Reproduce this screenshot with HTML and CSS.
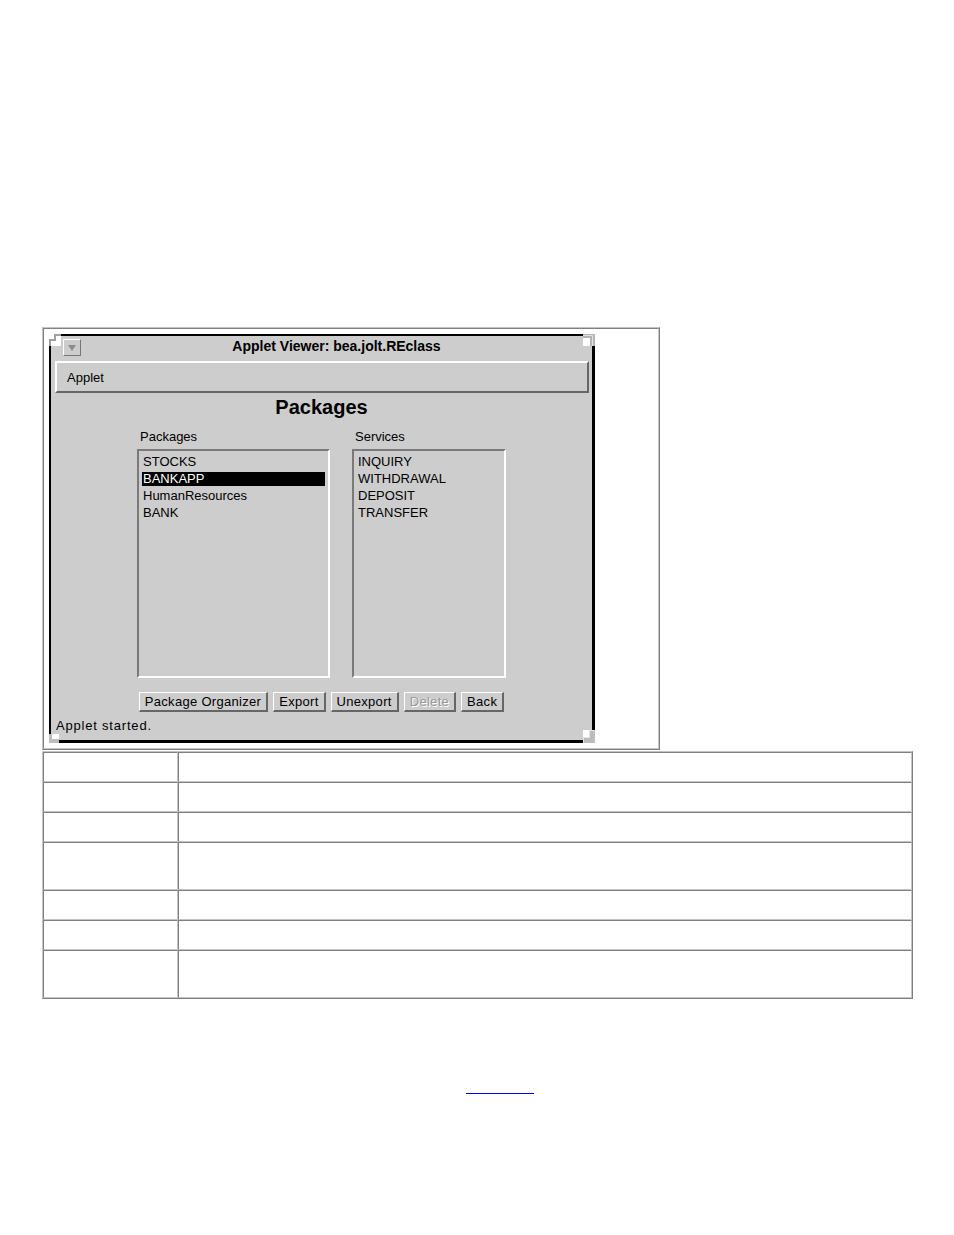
FILE: index.html
```html
<!DOCTYPE html>
<html>
<head>
<meta charset="utf-8">
<title>Packages</title>
<link rel="stylesheet" href="styles.css">
</head>
<body>
<div class="page">
  <table class="shot">
    <tr>
      <td class="shot-cell">
        <div class="shot-inner">
          <div class="window">
            <svg class="corner corner-tl" width="12" height="12" viewBox="0 0 12 12"><rect x="0" y="0" width="12" height="12" fill="#ffffff"/><path d="M1 12 V6 H6 V1 H12" fill="none" stroke="#a0a0a0" stroke-width="2"/></svg>
            <svg class="corner corner-tr" width="12" height="12" viewBox="0 0 12 12"><rect x="0" y="0" width="12" height="12" fill="#ffffff"/><polygon points="0,0 12,0 12,12 7,12 7,4 0,4" fill="#b4b4b4"/><path d="M0 1.5 H9.5 V12" fill="none" stroke="#e2e2e2" stroke-width="1"/></svg>
            <svg class="corner corner-br" width="12" height="13" viewBox="0 0 12 13"><rect x="0" y="0" width="12" height="13" fill="#ffffff"/><polygon points="6,0 12,0 12,13 0,13 0,7 6,7" fill="#bcbcbc"/><path d="M0.5 13 V7.5 H6.5 V0.5 H12" fill="none" stroke="#e6e6e6" stroke-width="1"/></svg>
            <svg class="corner corner-bl" width="10" height="9" viewBox="0 0 10 9"><rect x="0" y="0" width="10" height="9" fill="#ffffff"/><polygon points="0,0 3,0 3,5 10,5 10,9 0,9" fill="#bdbdbd"/></svg>
            <div class="titlebar">
              <div class="closebox"><svg width="8" height="6" viewBox="0 0 8 6"><polygon points="0,0 8,0 4,6" fill="#8c8c8c"/></svg></div>
              <div class="title">Applet Viewer: bea.jolt.REclass</div>
            </div>
            <div class="menubar">Applet</div>
            <div class="heading">Packages</div>
            <div class="lists">
              <div class="col">
                <div class="label">Packages</div>
                <div class="listbox listbox-wide">
                  <div class="item">STOCKS</div>
                  <div class="item sel">BANKAPP</div>
                  <div class="item">HumanResources</div>
                  <div class="item">BANK</div>
                </div>
              </div>
              <div class="col">
                <div class="label">Services</div>
                <div class="listbox listbox-narrow">
                  <div class="item">INQUIRY</div>
                  <div class="item">WITHDRAWAL</div>
                  <div class="item">DEPOSIT</div>
                  <div class="item">TRANSFER</div>
                </div>
              </div>
            </div>
            <div class="buttons">
              <span class="btn">Package Organizer</span>
              <span class="btn">Export</span>
              <span class="btn">Unexport</span>
              <span class="btn btn-disabled">Delete</span>
              <span class="btn">Back</span>
            </div>
            <div class="status">Applet started.</div>
          </div>
        </div>
      </td>
    </tr>
  </table>
  <table class="grid">
    <tr><td class="k">&nbsp;</td><td class="v">&nbsp;</td></tr>
    <tr><td class="k">&nbsp;</td><td class="v">&nbsp;</td></tr>
    <tr><td class="k">&nbsp;</td><td class="v">&nbsp;</td></tr>
    <tr class="tall"><td class="k">&nbsp;</td><td class="v">&nbsp;</td></tr>
    <tr><td class="k">&nbsp;</td><td class="v">&nbsp;</td></tr>
    <tr><td class="k">&nbsp;</td><td class="v">&nbsp;</td></tr>
    <tr class="tall"><td class="k">&nbsp;</td><td class="v">&nbsp;</td></tr>
  </table>
  <p class="foot"><a class="toplink" href="#">&nbsp;&nbsp;&nbsp;&nbsp;&nbsp;&nbsp;&nbsp;&nbsp;&nbsp;&nbsp;&nbsp;&nbsp;&nbsp;&nbsp;&nbsp;&nbsp;&nbsp;</a></p>
</div>
</body>
</html>
```

FILE: styles.css
```css
html, body {
  margin: 0;
  padding: 0;
  background: #ffffff;
}

body {
  font-family: "Liberation Serif", "Times New Roman", serif;
  font-size: 16px;
  color: #000000;
}

.page {
  padding: 327px 0 0 42px;
}

/* screenshot frame table */
.shot {
  border-collapse: separate;
  border-spacing: 0;
  border: 1px solid;
  border-color: #c4c4c4 #808080 #808080 #c4c4c4;
  margin: 0 0 1px 0;
}

.shot-cell {
  border: 1px solid;
  border-color: #808080 #c4c4c4 #c4c4c4 #808080;
  padding: 5px;
  vertical-align: top;
}

.shot-inner {
  width: 604px;
  height: 409px;
}

/* applet window */
.window {
  position: relative;
  width: 541px;
  height: 404px;
  border-style: solid;
  border-color: #000000;
  border-width: 2px 3px 3px 2px;
  background: #cdcdcd;
  font-family: "Liberation Sans", Arial, sans-serif;
  color: #000000;
}

.corner {
  position: absolute;
  display: block;
}

.corner-tl { top: -2px; left: -2px; }
.corner-tr { top: -2px; right: -3px; }
.corner-br { bottom: -3px; right: -3px; }
.corner-bl { bottom: -3px; left: -2px; }

.titlebar {
  display: flex;
  align-items: flex-start;
  height: 25px;
}

.closebox {
  margin: 3px 0 0 12px;
  width: 16px;
  height: 15px;
  border: 1px solid;
  border-color: #ffffff #767676 #767676 #ffffff;
  display: flex;
  align-items: center;
  justify-content: center;
}

.closebox svg {
  display: block;
}

.title {
  flex: 1;
  text-align: center;
  font-weight: bold;
  font-size: 14px;
  line-height: 20px;
}

.menubar {
  margin: 0 3px 0 4px;
  height: 28px;
  border-style: solid;
  border-width: 2px;
  border-color: #ffffff #666666 #666666 #ffffff;
  padding-left: 10px;
  font-size: 13px;
  line-height: 29px;
}

.heading {
  margin-top: 3px;
  text-align: center;
  font-size: 20px;
  font-weight: bold;
  line-height: 22px;
}

.lists {
  display: flex;
  justify-content: center;
  gap: 22px;
  margin-top: 11px;
}

.label {
  font-size: 13px;
  line-height: 15px;
  padding-left: 3px;
  margin-bottom: 5px;
}

.listbox {
  box-sizing: border-box;
  height: 229px;
  border-style: solid;
  border-width: 2px;
  border-color: #7a7a7a #ffffff #ffffff #7a7a7a;
  padding: 4px 3px;
}

.listbox-wide { width: 193px; }
.listbox-narrow { width: 154px; }

.item {
  height: 14px;
  line-height: 14px;
  margin-bottom: 3px;
  padding-left: 1px;
  font-size: 13px;
  white-space: nowrap;
}

.item.sel {
  background: #000000;
  color: #ffffff;
}

.buttons {
  display: flex;
  justify-content: center;
  gap: 5px;
  margin-top: 14px;
}

.btn {
  display: block;
  height: 17px;
  line-height: 17px;
  font-size: 13px;
  padding: 0 5px;
  letter-spacing: 0.3px;
  border-style: solid;
  border-width: 1px 2px 2px 1px;
  border-color: #ffffff #666666 #666666 #ffffff;
  background: #cdcdcd;
  white-space: nowrap;
}

.btn-disabled {
  color: #9a9a9a;
  text-shadow: 1px 1px 0 #ffffff;
}

.status {
  margin: 6px 0 0 5px;
  font-size: 13px;
  line-height: 15px;
  letter-spacing: 0.8px;
}

/* empty table */
.grid {
  border-collapse: separate;
  border-spacing: 0;
  border: 1px solid;
  border-color: #c4c4c4 #808080 #808080 #c4c4c4;
  width: 871px;
  table-layout: fixed;
}

.grid td {
  border: 1px solid;
  border-color: #808080 #c4c4c4 #c4c4c4 #808080;
  padding: 0;
  height: 28px;
  font-size: 16px;
  line-height: 18px;
}

.grid td.k { width: 133px; }
.grid td.v { width: 732px; }

.grid tr.tall td { height: 46px; }

.foot {
  margin: 79px 0 0 424px;
  font-size: 16px;
  line-height: 18px;
}

.toplink {
  color: #0000ff;
  text-decoration: underline;
  text-decoration-color: #0000ff;
}
```
